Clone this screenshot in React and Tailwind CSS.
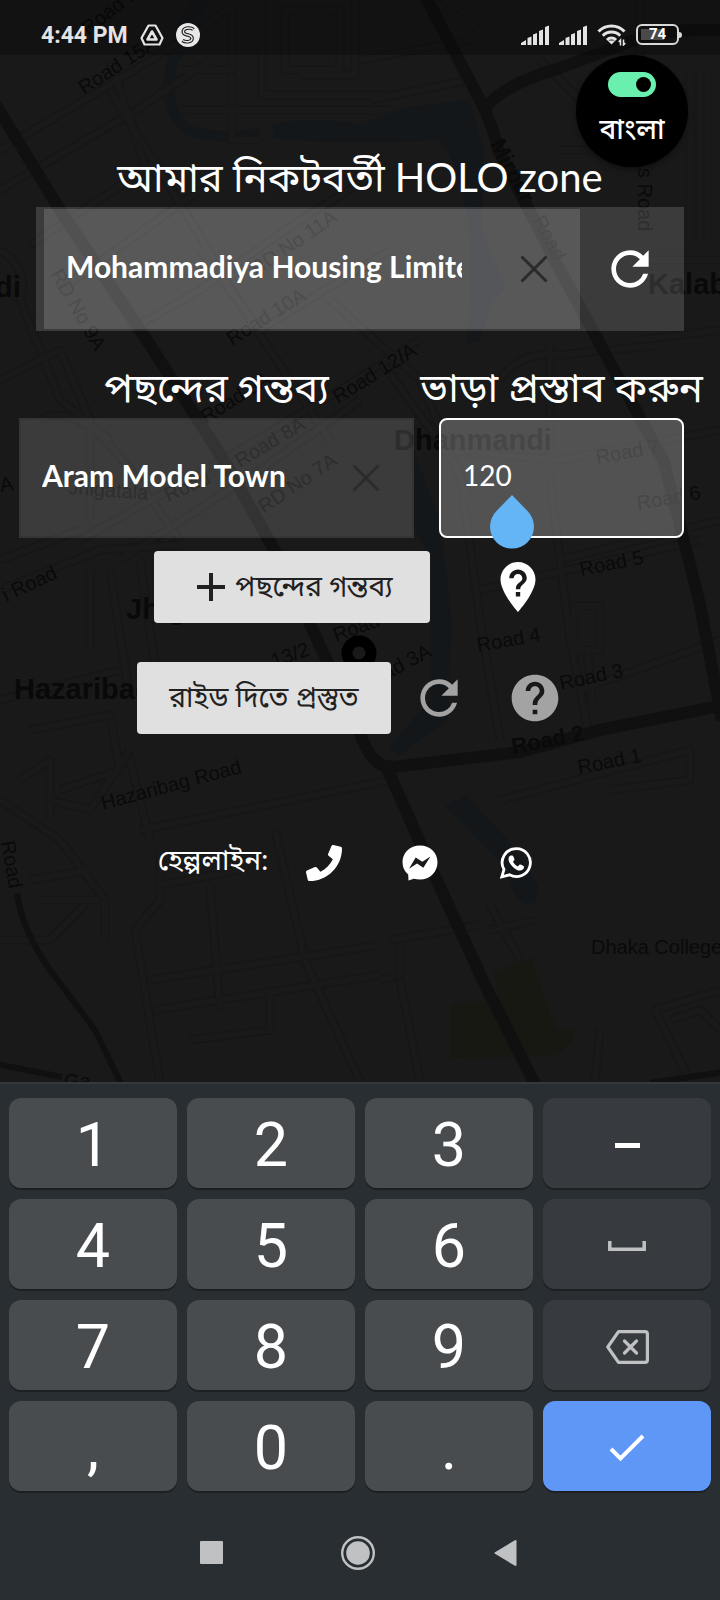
import React from "react";
import {
  MdRefresh,
  MdHelp,
  MdNotListedLocation,
  MdAdd,
} from "react-icons/md";
import { FaPhone } from "react-icons/fa";

const MINOR_ROADS = [
  "M0 150 L110 85 L200 30 L240 0",
  "M0 190 L140 108 L210 60",
  "M30 245 L160 160 M60 290 L200 190 M150 180 L110 60 M110 90 L190 220 L250 320 L330 440",
  "M180 70 H232 V0 M262 0 V95 H390 M232 95 V140 H260 M300 75 H355 V0 M180 110 H390 M232 110 V75",
  "M285 10 H340 V70 H285 Z M480 30 L430 0 M360 60 L470 40 M370 100 L470 80",
  "M0 250 Q30 270 20 300 L60 400 L110 440 M0 380 L60 350 L90 420 V520 M40 420 Q80 400 130 470 L180 540",
  "M130 330 L200 290 L300 220 L390 165 M200 250 L260 330 L390 250 M330 300 L420 380 L470 500",
  "M80 540 L240 450 L340 390 L420 340 M120 560 L260 470 L360 400 M0 560 L80 530 M0 590 L100 550 L180 545",
  "M90 570 V650 M110 570 L130 700 M140 560 L160 700 M0 700 L120 670 M30 730 L110 715 L120 770 L60 790 M20 780 L50 760 V820",
  "M0 800 L60 840 L105 900 V940 M30 880 L90 870 M40 900 H100 M50 800 L90 810 L130 750 M130 760 L150 840",
  "M0 940 H50 L85 905 M140 830 L390 780 M160 850 V900 L135 930 L160 1082 M275 830 L305 960 L360 1082 M210 885 L220 1010",
  "M150 980 L380 945 M155 1010 L380 975 M160 885 L240 870 M190 1040 L270 1030 V990",
  "M380 360 L460 470 L480 620 L500 740 M440 450 L560 460 L720 430 M550 340 V480 L570 640 L590 740",
  "M500 380 Q520 350 560 355 L660 345 M560 560 L720 520 M580 690 L720 640 M480 590 L700 540",
  "M574 606 H600 V650 H574 Z M587 650 L592 700 M500 800 L690 750 V780 L610 790",
  "M390 940 L480 925 M380 980 L400 975 V945 M400 980 L420 1082 M490 930 L535 920 M490 905 L520 960",
  "M720 990 L655 1010 L690 1082 M670 1020 L700 1010 L720 1030 M600 1030 L595 1082",
  "M560 150 H640 M540 60 L640 160 M690 70 V240 M700 70 V240 M650 260 H720 M640 340 L720 330 M640 0 V60",
];

const MAIN_ROADS = [
  "M-4 105 L60 210 L150 345 L225 462 L280 560 L322 650 L358 728 Q372 770 392 766",
  "M386 766 L430 865 L485 985 L538 1090",
  "M425 -4 L480 100 Q494 128 498 150 L560 270 L606 355 L664 462 L700 605 L722 720",
  "M482 112 Q500 85 560 68 L640 38 Q670 28 724 30",
  "M384 768 L520 752 L600 730 L720 706",
];

const SMALL_MAIN_ROADS = [
  "M17 893 Q22 930 50 970 L95 1030 L124 1090",
  "M-4 1064 L62 1077",
  "M650 1083 L724 1072",
];

const MAP_LABELS = [
  { x: 88, y: 36, r: -38, t: "Road 16" },
  { x: 84, y: 95, r: -33, t: "Road 15A" },
  { x: 50, y: 274, r: 60, t: "RD No 9A" },
  { x: 256, y: 276, r: -34, t: "RD No 11A" },
  { x: 232, y: 346, r: -32, t: "Road 10A" },
  { x: 338, y: 404, r: -32, t: "Road 12/A" },
  { x: 206, y: 424, r: -32, t: "Road 9A" },
  { x: 240, y: 468, r: -31, t: "Road 8A" },
  { x: 264, y: 514, r: -34, t: "RD No 7A" },
  { x: 68, y: 494, r: 4, t: "Jhigatala" },
  { x: 168, y: 502, r: -24, t: "Road" },
  { x: 597, y: 464, r: -10, t: "Road 7" },
  { x: 638, y: 510, r: -10, t: "Road 6" },
  { x: 581, y: 576, r: -11, t: "Road 5" },
  { x: 478, y: 652, r: -10, t: "Road 4" },
  { x: 561, y: 690, r: -12, t: "Road 3" },
  { x: 364, y: 692, r: -28, t: "Road 3A" },
  { x: 336, y: 642, r: -20, t: "Road" },
  { x: 274, y: 668, r: -20, t: "13/2" },
  { x: 579, y: 774, r: -11, t: "Road 1" },
  { x: 532, y: 220, r: 62, t: "Road" },
  { x: 638, y: 168, r: 90, t: "s Road" },
  { x: 103, y: 810, r: -15, t: "Hazaribag  Road" },
  { x: 6, y: 602, r: -25, t: "i Road" },
  { x: 1, y: 492, r: -10, t: "A" },
  { x: 1, y: 842, r: 80, t: "Road" },
  { x: 591, y: 954, r: 0, t: "Dhaka College" },
  { x: 64, y: 1088, r: 0, t: "Ga" },
  { x: 513, y: 754, r: -11, t: "Road 2", strong: true },
  { x: 490, y: 144, r: 62, t: "Mirpur", strong: true },
];

const PLACE_LABELS = [
  { x: -5, y: 297, t: "di" },
  { x: 394, y: 450, t: "Dhanmandi" },
  { x: 648, y: 294, t: "Kalabagan" },
  { x: 126, y: 619, t: "Jhigatala" },
  { x: 14, y: 699, t: "Hazaribag" },
];

function MapBackdrop() {
  return (
    <svg
      aria-hidden="true"
      viewBox="0 0 720 1082"
      preserveAspectRatio="xMidYMin slice"
      className="absolute inset-0 h-full w-full"
    >
      <rect width="720" height="1082" fill="#191919" />
      <g fill="#14171a">
        <path d="M190 0 H208 Q200 40 178 62 Q168 100 188 124 Q215 136 260 128 V140 Q215 146 185 134 Q158 115 164 75 Q172 30 190 0Z" />
        <path d="M272 124 Q310 116 360 124 L400 108 L470 100 L484 150 L482 230 L506 288 L494 300 L480 340 L466 345 Q482 200 440 140 Q340 146 274 138Z" />
        <path d="M410 440 L440 520 L452 620 L448 720 L400 755 L388 748 L430 700 L432 560 L415 530Z" />
        <path d="M445 806 L466 795 Q500 830 515 850 L538 885 L536 902 L524 904 Q505 885 508 870 Q470 830 445 806Z" />
      </g>
      <path d="M494 972 L532 958 L556 1030 L575 1028 Q575 1048 550 1056 L450 1058 V1004 L500 1000Z" fill="#171811" />
      <g fill="none" stroke="#161616" strokeWidth="9" strokeLinejoin="round">
        {MINOR_ROADS.map((d) => (
          <path key={d} d={d} />
        ))}
      </g>
      <g fill="none" stroke="#191919" strokeWidth="6" strokeLinejoin="round">
        {MINOR_ROADS.map((d) => (
          <path key={d} d={d} />
        ))}
      </g>
      <g fill="none" stroke="#101010" strokeWidth="12" strokeLinejoin="round">
        {MAIN_ROADS.map((d) => (
          <path key={d} d={d} />
        ))}
      </g>
      <g fill="none" stroke="#101010" strokeWidth="6" strokeLinejoin="round">
        {SMALL_MAIN_ROADS.map((d) => (
          <path key={d} d={d} />
        ))}
      </g>
      <g fill="#0a0a0a" fontFamily="Liberation Sans, Arial, sans-serif" fontSize="20">
        {MAP_LABELS.map((l) => (
          <text
            key={l.t + l.x}
            transform={`translate(${l.x} ${l.y}) rotate(${l.r})`}
            fontSize={l.strong ? 22 : 20}
            fontWeight={l.strong ? 700 : 400}
          >
            {l.t}
          </text>
        ))}
      </g>
      <g fill="#090909" fontFamily="Liberation Sans, Arial, sans-serif" fontSize="29" fontWeight="700">
        {PLACE_LABELS.map((l) => (
          <text key={l.t} x={l.x} y={l.y}>
            {l.t}
          </text>
        ))}
      </g>
      <circle cx="359" cy="653" r="12" fill="none" stroke="#000" strokeWidth="11" />
    </svg>
  );
}

function Signal() {
  return (
    <svg viewBox="0 0 28 20" className="h-5 w-7" fill="currentColor" aria-hidden="true">
      <path d="M0 20v-2l5-3v5zM6.500 20v-7l4-1.500V20zM12 20V9.500L16 8v12zM18 20V6l4-1.500V20zM24 20V2l4-1.500V20z" />
    </svg>
  );
}

function StatusBar() {
  return (
    <div className="relative z-10 flex h-[55px] items-center justify-between bg-black/25 pr-[38px] pl-[41px] pt-3.5 text-[#e4e4e4]">
      <div className="flex items-center gap-3">
        <span className="pt-[3px] font-[Roboto,sans-serif] text-[23px] font-bold">4:44 PM</span>
        <svg viewBox="0 0 24 22" className="h-[22px] w-6" fill="none" stroke="currentColor" aria-hidden="true">
          <path d="M8.500 1.500h7L22.500 14l-3 6.500h-15l-3-6.500z" strokeWidth="2.200" strokeLinejoin="round" />
          <path d="M12 7.500 16.500 15.500h-9z" strokeWidth="2.600" strokeLinejoin="round" />
        </svg>
        <svg viewBox="0 0 24 24" className="size-6" fill="none" aria-hidden="true">
          <circle cx="12" cy="12" r="12" fill="#e8e8e8" />
          <path
            d="M17.500 6.500C15.500 4.500 9 4 7.500 7.500 6.500 11 10 11.500 12 12s4.500 1.500 4 4c-.8 3.200-6.500 3.500-9.500 1.500"
            stroke="#1c1c1c"
            strokeWidth="3.600"
          />
          <path
            d="M17.500 6.500C15.500 4.500 9 4 7.500 7.500 6.500 11 10 11.500 12 12s4.500 1.500 4 4c-.8 3.200-6.500 3.500-9.500 1.500"
            stroke="#e8e8e8"
            strokeWidth="1.400"
          />
        </svg>
      </div>
      <div className="flex items-center gap-2.5">
        <Signal />
        <Signal />
        <svg viewBox="0 0 29 23" className="h-[23px] w-[29px]" fill="none" stroke="currentColor" aria-hidden="true">
          <path d="M1.500 8.500a18 18 0 0 1 26 0" strokeWidth="3" />
          <path d="M5.800 12.800a12 12 0 0 1 17.400 0" strokeWidth="3" />
          <path d="M10 17a6.200 6.200 0 0 1 9 0" strokeWidth="3" />
          <path d="m10.500 17.500 4 4 4-4z" fill="currentColor" stroke="none" />
          <path d="M23.500 22.500V17l-1.800 2M26.500 16.500V22l1.800-2" strokeWidth="1.500" />
        </svg>
        <div className="flex items-center">
          <div className="h-[21px] w-[43px] rounded-md border-2 border-[#d8d8d8] p-[3px]">
            <div className="flex h-full items-center justify-center bg-linear-to-r from-[#4a4a4a] from-70% to-transparent to-70% font-[Roboto,sans-serif] text-[15px] leading-none font-bold text-white">
              74
            </div>
          </div>
          <div className="h-1.5 w-[3px] rounded-r-sm bg-[#d8d8d8]" />
        </div>
      </div>
    </div>
  );
}

function LanguageToggle() {
  return (
    <button
      type="button"
      className="absolute top-[55px] right-8 z-20 flex size-28 flex-col items-center rounded-full bg-black pt-[17px] text-white shadow-md shadow-black/30"
    >
      <span className="flex h-[25px] w-12 items-center justify-end rounded-full bg-[#69f0ae] pr-[5px]">
        <span className="size-[15px] rounded-full bg-black" />
      </span>
      <span className="mt-[15px] text-[28px] leading-8 font-medium">বাংলা</span>
    </button>
  );
}

function ClearButton({ label }) {
  return (
    <button type="button" aria-label={label} className="flex size-12 shrink-0 items-center justify-center text-[#2b2b2b]">
      <svg viewBox="0 0 28 28" className="size-7" stroke="currentColor" strokeWidth="3" aria-hidden="true">
        <path d="M1.500 1.500 26.500 26.500M26.500 1.500 1.500 26.500" />
      </svg>
    </button>
  );
}

function MessengerIcon() {
  return (
    <svg viewBox="0 0 36 36" className="size-9" aria-hidden="true">
      <path
        d="M18 .5C8 .5.5 7.800.5 17.200c0 5 2.100 9.300 5.700 12.400L6.500 35.500l5.300-1.700c2 .5 4 .8 6.200.8 10 0 17.500-7.700 17.500-17.400S28 .5 18 .5Z"
        fill="currentColor"
      />
      <path d="M7 23.800 13.700 12.500 20.300 16.700 28.500 11.600 21.300 22.700 15 18.600Z" fill="#191919" />
    </svg>
  );
}

function WhatsAppIcon() {
  return (
    <svg viewBox="0 0 32 32" className="size-8" aria-hidden="true">
      <path
        d="M16.300 1.600A14 14 0 0 0 4 22.500L1.800 29.900 9.500 27.800A14 14 0 1 0 16.300 1.600Z"
        fill="none"
        stroke="currentColor"
        strokeWidth="2.800"
      />
      <path
        d="M10.500 8.500h1.500q1 0 1.400 1l1 2.600q.3.800-.3 1.400l-1.200 1.300q1.800 3.200 5 4.600l1.400-1.600q.5-.6 1.300-.2l2.600 1.200q.8.400.8 1.300 0 3-3.600 3.400-3.500.2-7.600-3.600-4.300-4.200-4.300-7.600 0-3 2-3.800z"
        fill="currentColor"
      />
    </svg>
  );
}

const KEYS = ["1", "2", "3", "-", "4", "5", "6", "space", "7", "8", "9", "back", ",", "0", ".", "done"];

function KeyFace({ k }) {
  if (k === "-") return <span className="h-[5px] w-[25px] bg-white" />;
  if (k === "space")
    return (
      <svg viewBox="0 0 38 10" className="h-2.5 w-[38px]" fill="none" stroke="#bfc1c3" strokeWidth="3.500" aria-hidden="true">
        <path d="M1.800 0v8.200h34.400V0" />
      </svg>
    );
  if (k === "back")
    return (
      <svg viewBox="0 0 43 34" className="h-[34px] w-[43px]" fill="none" stroke="#bfc1c3" strokeWidth="3.200" strokeLinejoin="round" strokeLinecap="round" aria-hidden="true">
        <path d="M12.500 1.600H39q2.400 0 2.400 2.400v26q0 2.400-2.400 2.400H12.500L1.800 17z" />
        <path d="m18.500 11 12 12M30.500 11l-12 12" />
      </svg>
    );
  if (k === "done")
    return (
      <svg viewBox="0 0 36 28" className="h-7 w-9" fill="none" stroke="#fff" strokeWidth="4" aria-hidden="true">
        <path d="m2 15 9.500 9.500L34 2" />
      </svg>
    );
  return k;
}

const KEY_NAMES = { "-": "Minus", space: "Space", back: "Backspace", done: "Done" };
const KEY_TONES = { "-": "bg-[#373b3f]", space: "bg-[#373b3f]", back: "bg-[#373b3f]", done: "bg-[#5e97f6]" };

function Keypad() {
  return (
    <div className="relative border-t-2 border-[#34393d] bg-[#292e32]">
      <div className="grid grid-cols-4 gap-x-2.5 gap-y-[11px] px-[9px] pt-3.5">
        {KEYS.map((k) => (
          <button
            key={k}
            type="button"
            aria-label={KEY_NAMES[k]}
            className={`flex h-[90px] items-center justify-center rounded-xl pt-1 font-[Roboto,sans-serif] text-[61px] leading-none text-white shadow-[0_2px_0_#1d2023] ${KEY_TONES[k] || "bg-[#484c4f]"}`}
          >
            <KeyFace k={k} />
          </button>
        ))}
      </div>
      <nav className="flex h-[109px] items-center justify-center gap-[113px] pt-3.5 pr-1 text-[#bfc1c3]">
        <button type="button" aria-label="Recent apps" className="flex w-[34px] justify-center">
          <span className="size-[23px] rounded-[1px] bg-[#bfc1c3]" />
        </button>
        <button type="button" aria-label="Home">
          <svg viewBox="0 0 34 34" className="size-[34px]" aria-hidden="true">
            <circle cx="17" cy="17" r="15.800" fill="none" stroke="currentColor" strokeWidth="2.400" />
            <circle cx="17" cy="17" r="11.800" fill="currentColor" />
          </svg>
        </button>
        <button type="button" aria-label="Back" className="flex w-[34px] justify-center">
          <svg viewBox="0 0 23 26" className="h-[26px] w-[23px]" fill="currentColor" stroke="currentColor" strokeWidth="2" strokeLinejoin="round" aria-hidden="true">
            <path d="M1.500 13 21.500 1v24z" />
          </svg>
        </button>
      </nav>
    </div>
  );
}

export default function App() {
  return (
    <div className="flex min-h-screen flex-col overflow-hidden bg-[#191919] font-[Lato,'Noto_Sans_Bengali','Noto_Sans',sans-serif] text-white">
      <main className="relative flex-1">
        <MapBackdrop />
        <StatusBar />
        <LanguageToggle />

        <div className="relative">
          <h1 className="pt-[98px] pb-1.5 text-center text-[40px] leading-[48px]">
            <label htmlFor="zone">আমার নিকটবর্তী HOLO zone</label>
          </h1>

          <div className="mx-9 flex h-[124px] items-center bg-white/15 py-0.5 pl-2">
            <div className="flex h-full min-w-0 flex-1 items-center bg-white/15 pr-[22px] pl-[22px]">
              <input
                id="zone"
                defaultValue="Mohammadiya Housing Limited"
                className="mr-12 h-full min-w-0 flex-1 bg-transparent pb-1.5 text-[30px] font-bold outline-none"
              />
              <ClearButton label="Clear zone" />
            </div>
            <button type="button" aria-label="Refresh zone" className="flex w-[104px] justify-center pr-1">
              <MdRefresh className="size-14" />
            </button>
          </div>

          <div className="mt-8 grid grid-cols-[minmax(0,395fr)_minmax(0,245fr)] gap-x-[25px] pr-9 pl-[19px]">
            <label htmlFor="dest" className="pb-[7px] text-center text-[40px] leading-[48px] whitespace-nowrap">
              পছন্দের গন্তব্য
            </label>
            <label htmlFor="fare" className="flex justify-center pb-[7px] text-[40px] leading-[48px] whitespace-nowrap">
              ভাড়া প্রস্তাব করুন
            </label>
            <div className="flex h-[120px] items-center border-2 border-black/10 bg-white/15 pr-[22px] pl-[21px]">
              <input
                id="dest"
                defaultValue="Aram Model Town"
                className="h-full min-w-0 flex-1 bg-transparent pb-1.5 text-[30px] font-bold outline-none"
              />
              <ClearButton label="Clear destination" />
            </div>
            <div className="relative h-[120px]">
              <input
                id="fare"
                defaultValue="120"
                inputMode="numeric"
                className="h-full w-full rounded-lg border-2 border-white bg-white/25 px-[22px] pb-1.5 text-[28px] outline-none"
              />
              <svg viewBox="0 0 44 54" className="absolute top-[77px] left-[51px] h-[54px] w-11" fill="#64b5f6" aria-hidden="true">
                <path d="M22 0 37.500 16A22 22 0 1 1 6.500 16z" />
              </svg>
            </div>
          </div>

          <div className="mt-[13px] flex items-center justify-center gap-[58px] pr-[18px]">
            <button type="button" className="flex h-[72px] w-[276px] items-center justify-center rounded bg-[#e0e0e0] pr-1 text-[28px] text-[#212121]">
              <MdAdd className="size-12" />
              <span className="pb-1">পছন্দের গন্তব্য</span>
            </button>
            <button type="button" aria-label="Location help">
              <MdNotListedLocation className="size-[60px]" />
            </button>
          </div>

          <div className="mt-[39px] flex items-center justify-center pr-5">
            <button type="button" className="h-[72px] w-[254px] rounded bg-[#e0e0e0] pb-1 text-[28px] text-[#212121]">
              রাইড দিতে প্রস্তুত
            </button>
            <button type="button" aria-label="Refresh ride" className="ml-5 text-[#a3a3a3]">
              <MdRefresh className="size-14" />
            </button>
            <button type="button" aria-label="Ride help" className="ml-10 text-[#a3a3a3]">
              <MdHelp className="size-14" />
            </button>
          </div>

          <div className="mt-[101px] flex items-center justify-center pr-[30px]">
            <span className="pb-2 text-[28px] leading-[48px]">হেল্পলাইন:</span>
            <a href="tel:16000" aria-label="Call" className="ml-[38px]">
              <FaPhone className="size-9" />
            </a>
            <a href="#messenger" aria-label="Messenger" className="ml-[60px]">
              <MessengerIcon />
            </a>
            <a href="#whatsapp" aria-label="WhatsApp" className="ml-[62px]">
              <WhatsAppIcon />
            </a>
          </div>
        </div>
      </main>
      <Keypad />
    </div>
  );
}
